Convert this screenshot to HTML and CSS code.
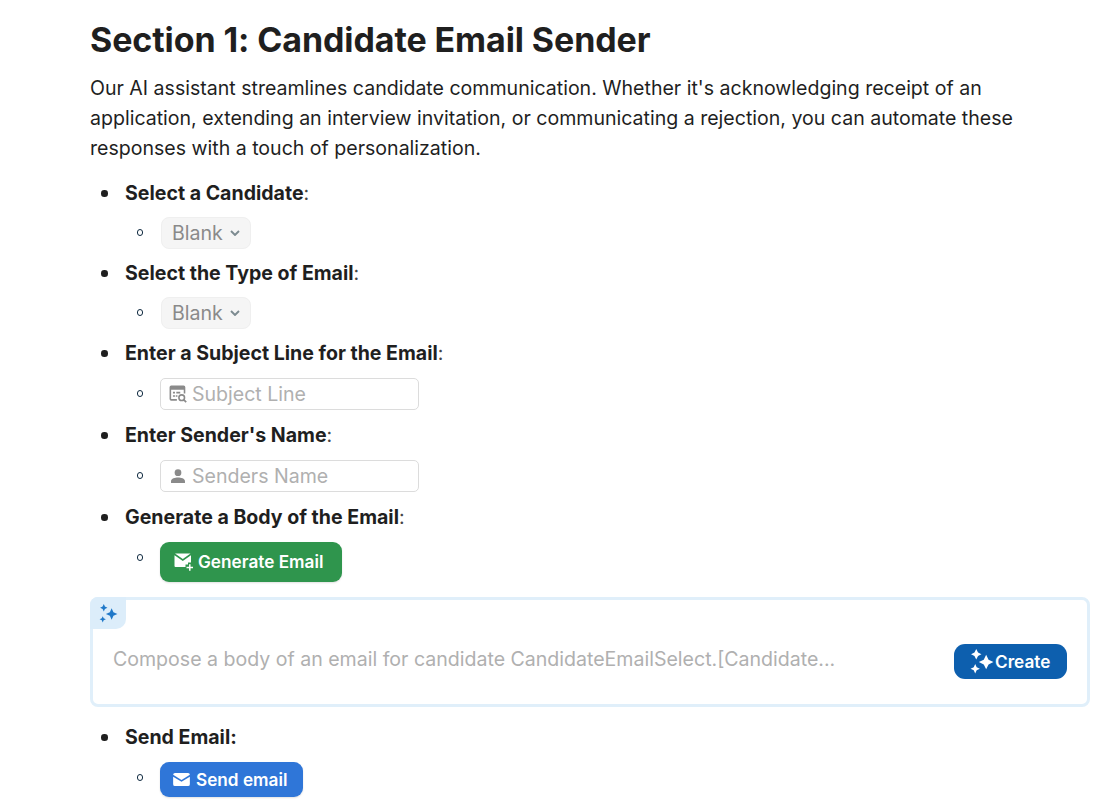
FILE: index.html
```html
<!DOCTYPE html>
<html lang="en">
<head>
<meta charset="utf-8">
<title>Candidate Email Sender</title>
<link rel="stylesheet" href="styles.css">
</head>
<body>
<main class="page">
  <h1 class="title">Section 1: Candidate Email Sender</h1>
  <p class="intro">Our AI assistant streamlines candidate communication. Whether it's acknowledging receipt of an application, extending an interview invitation, or communicating a rejection, you can automate these responses with a touch of personalization.</p>
  <ul class="list">
    <li class="item"><strong>Select a Candidate</strong><span class="colon">:</span>
      <ul class="sub"><li class="sub-item sub-select"><span class="select">Blank<svg class="chev" viewBox="0 0 10 6"><path d="M1 1l4 4 4-4" fill="none" stroke="currentColor" stroke-width="1.900"/></svg></span></li></ul>
    </li>
    <li class="item"><strong>Select the Type of Email</strong><span class="colon">:</span>
      <ul class="sub"><li class="sub-item sub-select"><span class="select">Blank<svg class="chev" viewBox="0 0 10 6"><path d="M1 1l4 4 4-4" fill="none" stroke="currentColor" stroke-width="1.900"/></svg></span></li></ul>
    </li>
    <li class="item"><strong>Enter a Subject Line for the Email</strong><span class="colon">:</span>
      <ul class="sub"><li class="sub-item"><span class="field"><svg class="field-icon" viewBox="0 0 16 16"><path d="M2 .5h11A1.500 1.500 0 0 1 14.500 2v5.500h-1.400V4.300H1.900v8.200H7V14H2A1.500 1.500 0 0 1 .5 12.500V2A1.500 1.500 0 0 1 2 .5z" fill="#8a8a8a"/><path d="M3.500 6h1.800v1.500H3.500zM6.500 6h3.500v1.500H6.500zM3.500 9h1.800v1.500H3.500zM6 9h1.500v1.500H6z" fill="#8a8a8a"/><circle cx="11.300" cy="11.300" r="2.500" fill="none" stroke="#8a8a8a" stroke-width="1.400"/><path d="M13 13l2.300 2.300" stroke="#8a8a8a" stroke-width="1.500"/></svg>Subject Line</span></li></ul>
    </li>
    <li class="item"><strong>Enter Sender's Name</strong><span class="colon">:</span>
      <ul class="sub"><li class="sub-item"><span class="field"><svg class="field-icon" viewBox="0 0 16 16"><circle cx="8" cy="5" r="3" fill="#8a8a8a"/><path d="M1.800 14.200v-1.700C1.800 10.300 5.500 9.300 8 9.300s6.200 1 6.200 3.200v1.700z" fill="#8a8a8a"/></svg>Senders Name</span></li></ul>
    </li>
    <li class="item"><strong>Generate a Body of the Email</strong><span class="colon">:</span>
      <ul class="sub"><li class="sub-item sub-btn"><span class="btn btn-green"><svg class="btn-icon-lg" viewBox="0 0 20 18"><path d="M1 .5h15.500L8.800 6z" fill="#fff"/><path d="M.5 2.300V13a1 1 0 0 0 1 1h10v-2.500H14V9.500h3V2.300L8.800 8z" fill="#fff"/><path d="M15.800 11.300v6.500M12.500 14.500h6.500" stroke="#fff" stroke-width="1.500"/></svg>Generate Email</span></li></ul>
    </li>
  </ul>
  <section class="ai-box">
    <span class="ai-tab"><svg class="ai-tab-icon" viewBox="0 0 20 20"><path d="M13 5l1.700 3.800 3.800 1.700-3.800 1.700L13 16l-1.700-3.800-3.800-1.700 3.800-1.700z" fill="#1f78c8"/><path d="M5.500 1l1.100 2.400L9 4.500 6.600 5.600 5.500 8 4.400 5.600 2 4.500l2.400-1.100z" fill="#1f78c8"/><path d="M4.500 12.500l.9 2.100 2.100.9-2.100.9-.9 2.100-.9-2.100-2.100-.9 2.100-.9z" fill="#1f78c8"/></svg></span>
    <span class="prompt">Compose a body of an email for candidate CandidateEmailSelect.[Candidate...</span>
    <span class="btn btn-create"><svg class="create-icon" viewBox="0 0 24 24"><path d="M15.500 5.500l2.300 4.700 4.700 2.300-4.700 2.300-2.300 4.700-2.300-4.700-4.700-2.300 4.700-2.300z" fill="#fff"/><path d="M6 0l1.700 3.300L11 5 7.700 6.700 6 10 4.300 6.700 1 5l3.300-1.700z" fill="#fff"/><path d="M5 14.500l1.400 3.100 3.100 1.400-3.100 1.400L5 23.500l-1.400-3.100L.5 19l3.100-1.400z" fill="#fff"/></svg>Create</span>
  </section>
  <ul class="list list-last">
    <li class="item"><strong>Send Email:</strong>
      <ul class="sub"><li class="sub-item sub-btn"><span class="btn btn-blue"><svg class="btn-icon" viewBox="0 0 18 14"><path d="M2 0h14a2 2 0 0 1 2 2L9 7.500 0 2a2 2 0 0 1 2-2z" fill="#fff"/><path d="M0 4l9 5.500L18 4v8a2 2 0 0 1-2 2H2a2 2 0 0 1-2-2z" fill="#fff"/></svg>Send email</span></li></ul>
    </li>
  </ul>
</main>
</body>
</html>
```
FILE: styles.css
```css
html, body {
  margin: 0;
  padding: 0;
  height: 812px;
  overflow: hidden;
  background: #fff;
}
body {
  font-family: Inter, "Liberation Sans", sans-serif;
  font-size: 19.560px;
  color: #1f1f1f;
}
.page {
  padding: 18px 3px 0 90px;
}
.title {
  margin: 0;
  font-size: 34px;
  line-height: 44px;
  font-weight: 700;
  letter-spacing: -0.100px;
}
.intro {
  margin: 11px 0 0;
  line-height: 30px;
}
.list {
  margin: 15px 0 0;
  padding-left: 35px;
  list-style: none;
}
.item {
  position: relative;
  line-height: 30px;
}
.item::before {
  content: "";
  position: absolute;
  left: -24px;
  top: 12px;
  width: 6.500px;
  height: 6.500px;
  border-radius: 50%;
  background: #1f1f1f;
}
.item strong {
  font-weight: 700;
}
.colon {
  color: #444;
}
.sub {
  margin: 0;
  padding-left: 35px;
  list-style: none;
}
.sub-item {
  position: relative;
  display: flex;
  margin: 10px 0;
  line-height: 30px;
}
.sub-item::before {
  content: "";
  position: absolute;
  left: -23.500px;
  top: 12px;
  width: 6.500px;
  height: 6.500px;
  box-sizing: border-box;
  border: 1.500px solid #0f2a40;
  border-radius: 50%;
}
.sub-select {
  margin: 9px 0;
}
.sub-btn {
  margin-bottom: 0;
}
.select {
  display: flex;
  align-items: center;
  height: 32px;
  padding: 0 10px 0 10px;
  margin-left: 1px;
  background: #f5f5f5;
  border: 1px solid #efefef;
  border-radius: 8px;
  box-sizing: border-box;
  color: #8a8a8a;
}
.chev {
  width: 10px;
  height: 6px;
  margin-left: 7px;
  color: #7c8a90;
}
.field {
  display: flex;
  align-items: center;
  width: 259px;
  height: 32px;
  padding-left: 8px;
  box-sizing: border-box;
  border: 1px solid #dcdcdc;
  border-radius: 5px;
  color: #b0b0b0;
}
.field-icon {
  width: 18px;
  height: 18px;
  margin-right: 5px;
}
.btn {
  display: flex;
  align-items: center;
  color: #fff;
  font-weight: 600;
  font-size: 17.200px;
  box-sizing: border-box;
}
.btn-green {
  width: 182px;
  height: 40px;
  padding-left: 14px;
  background: #2f954d;
  border-radius: 9px;
  box-shadow: 0 1px 2px rgba(0,0,0,.12);
}
.btn-icon-lg {
  width: 20px;
  height: 18px;
  margin-right: 4px;
}
.btn-blue {
  width: 143px;
  height: 35px;
  padding-left: 13px;
  background: #2f76d8;
  border-radius: 9px;
  box-shadow: 0 1px 2px rgba(0,0,0,.12);
}
.btn-icon {
  width: 17px;
  height: 13px;
  margin-right: 6px;
}
.ai-box {
  position: relative;
  display: flex;
  align-items: center;
  justify-content: space-between;
  box-sizing: border-box;
  width: 1000px;
  height: 110px;
  margin-top: 15px;
  padding: 14px 20px 0;
  border: 3px solid #e0effa;
  border-radius: 8px;
}
.ai-tab {
  position: absolute;
  left: -3px;
  top: -3px;
  width: 36px;
  height: 32px;
  display: flex;
  align-items: center;
  justify-content: center;
  background: #dcedfa;
  border-radius: 8px 0 10px 0;
}
.ai-tab-icon {
  width: 21px;
  height: 21px;
}
.prompt {
  color: #b0b0b0;
  font-size: 19.560px;
}
.btn-create {
  width: 113px;
  height: 35px;
  padding-left: 16px;
  margin-top: 4px;
  background: #0d5fae;
  border-radius: 11px;
}
.create-icon {
  width: 25px;
  height: 25px;
}
.list-last {
  margin-top: 15px;
}
```
